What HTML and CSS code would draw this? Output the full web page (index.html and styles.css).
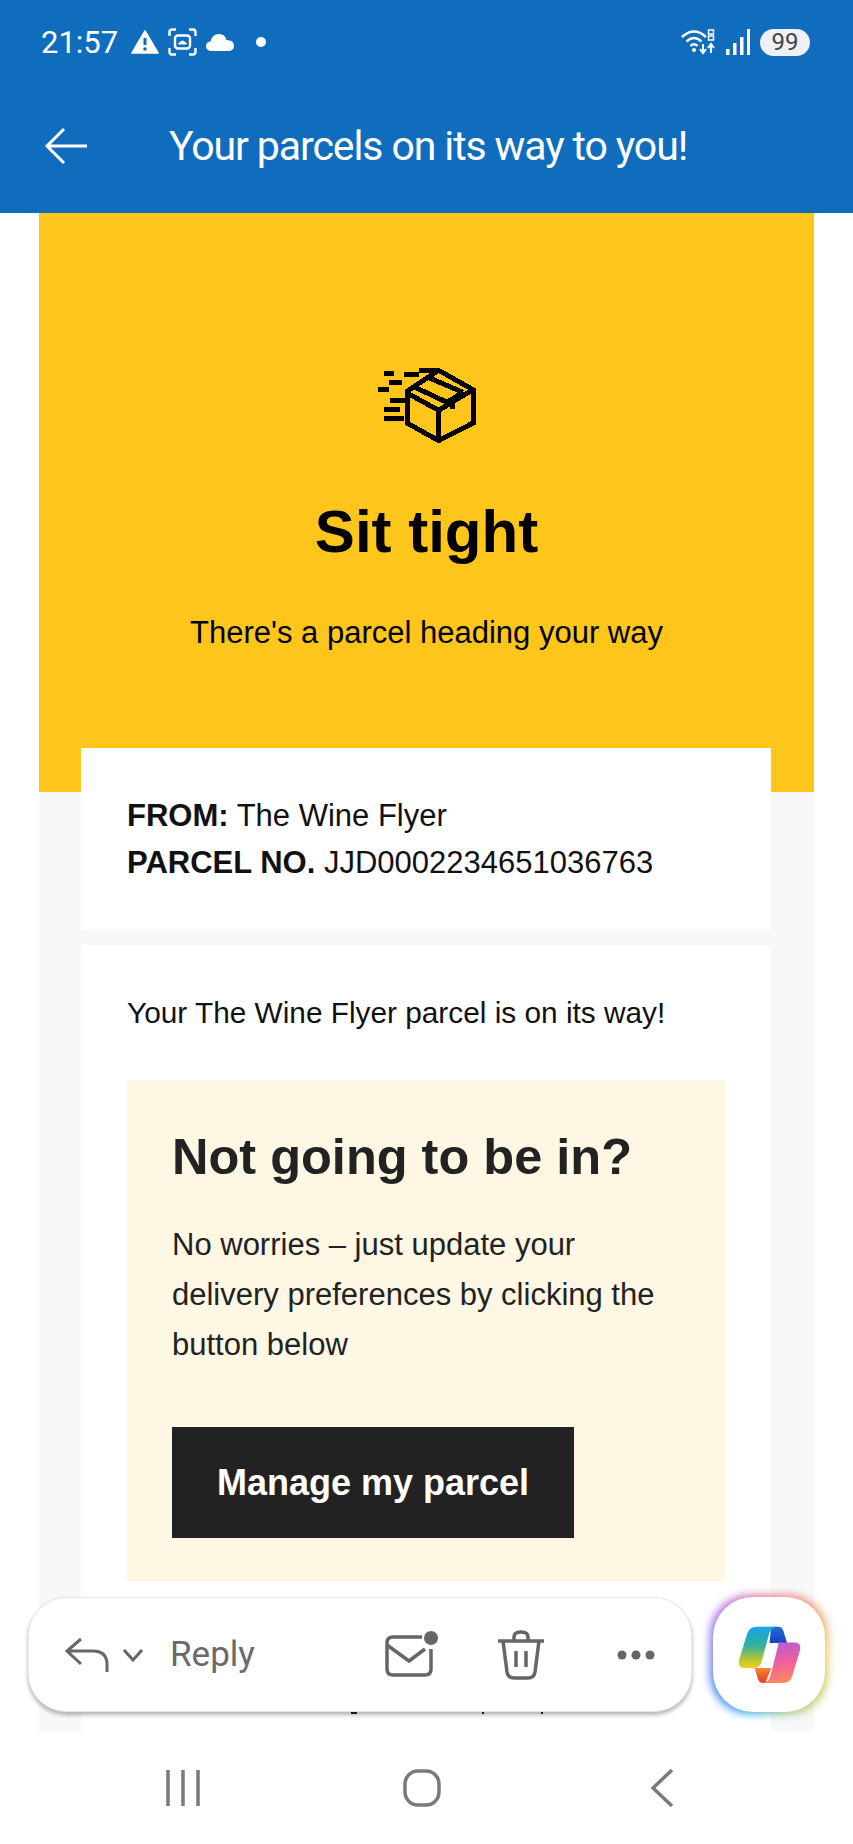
FILE: index.html
```html
<!DOCTYPE html>
<html lang="en">
  <head>
    <meta charset="UTF-8" />
    <meta name="viewport" content="width=device-width, initial-scale=1.0" />
    <title>Your parcels on its way to you!</title>
    <link rel="stylesheet" href="styles.css">
  </head>
  <body>
    <header class="top">
      <div class="status">
        <span class="time">21:57</span>
        <svg class="st-warn" width="28" height="24" viewBox="0 0 28 24">
          <path d="M14 1 27 23H1Z" fill="#fff" stroke="#fff" stroke-width="1.5" stroke-linejoin="round" />
          <path d="M14 8v7" stroke="#106cbd" stroke-width="3" />
          <circle cx="14" cy="19" r="1.8" fill="#106cbd" />
        </svg>
        <svg class="st-shot" width="29" height="28" viewBox="0 0 29 28" fill="none" stroke="#fff" stroke-width="2.4">
          <path d="M1.5 8V4q0-2.500 3-2.500H8M21 1.500h4q2.500 0 2.500 3V8M27.500 20v4q0 2.500-2.500 2.500h-4M8 26.500H4q-2.500 0-2.500-2.500v-4" />
          <rect x="7" y="7.500" width="15" height="13" rx="3" />
          <path d="M10.500 16q4-6 8 0Z" fill="#fff" stroke-width="1" />
        </svg>
        <svg class="st-cloud" width="28" height="18" viewBox="0 0 28 18">
          <path d="M6 18Q0 18 0 13 0 9 4.500 8.500 6 1 13 1q6 0 7.500 6 7.500 0 7.500 6 0 5-6 5Z" fill="#fff" />
        </svg>
        <span class="st-dot"></span>
        <span class="st-fill"></span>
        <svg class="st-wifi" width="36" height="28" viewBox="0 0 36 28" fill="none" stroke="#fff" stroke-width="2.400">
          <path d="M1 9q12-11 24 0M5.500 13.500q7.500-7 15 0M9.500 18q3.500-3.500 7 0" />
          <circle cx="13" cy="22" r="2" fill="#fff" stroke="none" />
          <path d="M22 16v8M19 21l3 4 3-4M30 25v-8M27 20l3-4 3 4" stroke-width="2" />
          <rect x="27.500" y="2" width="5" height="4" stroke-width="1.500" />
          <rect x="27.500" y="8" width="5" height="4" stroke-width="1.500" />
        </svg>
        <svg class="st-signal" width="24" height="26" viewBox="0 0 24 26" fill="#fff">
          <rect x="0" y="20" width="3.500" height="6" />
          <rect x="7" y="14" width="3.500" height="12" />
          <rect x="14" y="8" width="3.500" height="18" />
          <rect x="21" y="0" width="3" height="26" />
        </svg>
        <span class="battery">99</span>
      </div>
      <div class="appbar">
        <svg class="back" width="44" height="38" viewBox="0 0 44 38" fill="none" stroke="#fff" stroke-width="3">
          <path d="M43 19H3M20 2 3 19l17 17" />
        </svg>
        <h1>Your parcels on its way to you!</h1>
      </div>
    </header>

    <main class="viewer">
      <div class="mail">
        <section class="hero">
          <svg class="parcel" width="100" height="75" viewBox="110 85 300 225" fill="none" stroke="#000" stroke-width="15" shape-rendering="crispEdges">
            <path d="M295 303 200 250V155L295 92 398 150V250ZM200 160 295 212 398 150M295 212V305" />
            <path d="M222 142 320 188 368 158M268 115 368 158M335 175V207" />
            <path d="M130 102H160M190 104H235M235 92H295M145 128H185M114 148H145M150 182H200M130 210H178M130 236H190" />
          </svg>
          <h2>Sit tight</h2>
          <p>There's a parcel heading your way</p>
        </section>
        <section class="card ref">
          <p><b>FROM:</b> The Wine Flyer</p>
          <p><b>PARCEL NO.</b> JJD0002234651036763</p>
        </section>
        <section class="card body">
          <p class="intro">Your The Wine Flyer parcel is on its way!</p>
          <div class="notice">
            <h3>Not going to be in?</h3>
            <p>No worries – just update your delivery preferences by clicking the button below</p>
            <a class="btn" href="#">Manage my parcel</a>
          </div>
          <div class="peek"><span></span><span></span><span></span></div>
        </section>
      </div>

      <div class="actions">
        <div class="bar">
          <svg width="44" height="36" viewBox="0 0 44 36" fill="none" stroke="#666" stroke-width="3">
            <path d="M16 2 2 14l14 13M2 14h26q13 0 14 12v9" />
          </svg>
          <svg class="chev" width="22" height="14" viewBox="0 0 22 14" fill="none" stroke="#666" stroke-width="3">
            <path d="M2 2l9 10 9-10" />
          </svg>
          <span class="reply">Reply</span>
          <span class="bar-fill"></span>
          <svg class="ic-mail" width="54" height="48" viewBox="0 0 54 48" fill="none" stroke="#666" stroke-width="3.500">
            <path d="M37 6H8Q2 6 2 12V38Q2 44 8 44H40Q46 44 46 38V18" />
            <path d="M2 14 24 30 40 18" />
            <circle cx="46" cy="7" r="7" fill="#666" stroke="none" />
          </svg>
          <svg class="ic-bin" width="48" height="50" viewBox="0 0 48 50" fill="none" stroke="#666" stroke-width="3.500">
            <path d="M1 11H47M17 10V7Q17 2 24 2T31 7V10M6 11 10 42Q11 48 17 48H31Q37 48 38 42L42 11M19 21V37M29 21V37" />
          </svg>
          <svg class="ic-more" width="38" height="10" viewBox="0 0 38 10" fill="#666">
            <circle cx="5" cy="5" r="4.500" /><circle cx="19" cy="5" r="4.500" /><circle cx="33" cy="5" r="4.500" />
          </svg>
        </div>
        <div class="copilot">
          <svg width="63" height="57" viewBox="140 135 190 172">
            <defs>
              <linearGradient id="cpLeft" x1="0" y1="0" x2="0" y2="1">
                <stop offset="0" stop-color="#17a4e6" />
                <stop offset="0.45" stop-color="#2fb0a0" />
                <stop offset="0.8" stop-color="#b9c72c" />
                <stop offset="1" stop-color="#f3cf1c" />
              </linearGradient>
              <linearGradient id="cpRight" x1="0.4" y1="0" x2="0.6" y2="1">
                <stop offset="0" stop-color="#b45fd8" />
                <stop offset="0.5" stop-color="#ee5f9d" />
                <stop offset="1" stop-color="#ff8a5a" />
              </linearGradient>
              <linearGradient id="cpTop" x1="0" y1="0" x2="0" y2="1">
                <stop offset="0" stop-color="#1f6fd8" />
                <stop offset="1" stop-color="#1c3fc4" />
              </linearGradient>
              <linearGradient id="cpLow" x1="0" y1="0" x2="0" y2="1">
                <stop offset="0" stop-color="#f5863a" />
                <stop offset="1" stop-color="#e8391f" />
              </linearGradient>
            </defs>
            <path d="M240 137H262Q272 137 277 150L288 186H235Z" fill="url(#cpTop)" />
            <path d="M190 262H241L222 307H215Q204 307 200 295Z" fill="url(#cpLow)" />
            <path d="M195 137H258Q240 140 234 158L212 240Q207 262 188 262H160Q138 262 143 238L167 160Q174 137 195 137Z" fill="url(#cpLeft)" />
            <path d="M262 185H310Q332 185 327 208L304 285Q298 307 275 307H212Q232 305 238 284L247 250 258 205Q262 190 262 185Z" fill="url(#cpRight)" />
          </svg>
        </div>
      </div>
    </main>

    <nav class="sysnav">
      <svg width="36" height="38" viewBox="0 0 36 38" stroke="#7a7a7a" stroke-width="3.500">
        <path d="M3 1V37M18 1V37M33 1V37" />
      </svg>
      <svg class="home" width="38" height="38" viewBox="0 0 38 38" fill="none" stroke="#7a7a7a" stroke-width="3.500">
        <rect x="2" y="2" width="34" height="34" rx="13" />
      </svg>
      <svg width="24" height="40" viewBox="0 0 24 40" fill="none" stroke="#7a7a7a" stroke-width="3.500">
        <path d="M22 2 3 20l19 18" />
      </svg>
    </nav>
  </body>
</html>
```

FILE: styles.css
```css
* {
  box-sizing: border-box;
  margin: 0;
  padding: 0;
}
html,
body {
  height: 100%;
}
body {
  display: flex;
  flex-direction: column;
  width: 853px;
  height: 1844px;
  overflow: hidden;
  background-color: #fff;
  color: #111;
  font-family: "Liberation Sans", Arial, sans-serif;
}

/* blue top area */
.top {
  height: 213px;
  flex: none;
  background-color: #106cbd;
  color: #fff;
  font-family: Roboto, "Noto Sans", sans-serif;
}
.status {
  display: flex;
  align-items: center;
  height: 84px;
  padding: 0 43px 0 41px;
}
.time {
  font-size: 31px;
  margin-right: 13px;
}
.st-warn {
  margin-right: 9px;
}
.st-shot {
  margin-right: 9px;
}
.st-cloud {
  margin-right: 22px;
}
.st-dot {
  width: 10px;
  height: 10px;
  border-radius: 50%;
  background-color: #fff;
}
.st-fill {
  flex: 1;
}
.st-wifi {
  margin-right: 9px;
}
.st-signal {
  margin-right: 10px;
}
.battery {
  width: 50px;
  height: 27px;
  border-radius: 14px;
  background-color: #eef0f5;
  color: #444;
  font-size: 24px;
  line-height: 27px;
  text-align: center;
}
.appbar {
  display: flex;
  align-items: center;
  height: 62px;
  margin-top: 31px;
  padding-left: 44px;
}
.appbar h1 {
  margin-left: 81px;
  font-size: 41px;
  font-weight: 400;
  letter-spacing: -1.1px;
  white-space: nowrap;
}

/* mail body */
.viewer {
  position: relative;
  flex: 1;
  min-height: 0;
}
.mail {
  width: 775px;
  height: 1518px;
  margin-left: 39px;
  overflow: hidden;
  background-color: #f8f8f8;
}
.hero {
  height: 579px;
  padding-top: 155px;
  background-color: #fec61a;
  color: #000;
  text-align: center;
}
.parcel {
  display: block;
  margin: 0 auto;
}
.hero h2 {
  margin-top: 54px;
  font-size: 60px;
  line-height: 70px;
}
.hero p {
  margin-top: 46px;
  font-size: 31px;
  line-height: 40px;
}
.card {
  width: 690px;
  margin-left: 42px;
  background-color: #fff;
  padding-left: 46px;
  padding-right: 46px;
}
.ref {
  height: 182px;
  margin-top: -44px;
  padding-top: 44px;
  font-size: 31px;
  line-height: 47px;
}
.body {
  margin-top: 15px;
  padding-top: 48px;
  height: 800px;
}
.intro {
  font-size: 29.8px;
  line-height: 40px;
}
.notice {
  height: 501px;
  margin-top: 47px;
  padding: 47px 45px 0;
  background-color: #fef7e4;
  color: #222;
}
.notice h3 {
  font-size: 50.5px;
  line-height: 60px;
}
.notice p {
  margin-top: 33px;
  font-size: 31px;
  line-height: 50px;
}
.btn {
  display: block;
  width: 402px;
  height: 111px;
  margin-top: 57px;
  background-color: #222;
  color: #fff;
  font-size: 36px;
  font-weight: 700;
  line-height: 111px;
  text-align: center;
  text-decoration: none;
}

/* bits of the next paragraph showing under the action bar */
.peek {
  display: flex;
  margin-top: 131px;
  padding-left: 224px;
}
.peek span {
  width: 2px;
  height: 2px;
  background-color: #222;
}
.peek span:nth-child(1) {
  width: 6px;
}
.peek span:nth-child(2) {
  margin-left: 125px;
}
.peek span:nth-child(3) {
  margin-left: 57px;
}

/* floating actions */
.actions {
  position: absolute;
  left: 28px;
  top: 1384px;
  display: flex;
  gap: 21px;
}
.bar {
  display: flex;
  align-items: center;
  width: 664px;
  height: 115px;
  padding: 0 36px 0 36px;
  border: 1px solid #e6e6e6;
  border-radius: 38px;
  background-color: #fff;
  box-shadow: 0 3px 4px rgba(0, 0, 0, 0.3);
}
.chev {
  margin-left: 13px;
}
.reply {
  margin-left: 26px;
  color: #6a6a6a;
  font-family: Roboto, "Noto Sans", sans-serif;
  font-size: 35px;
}
.bar-fill {
  flex: 1;
}
.ic-mail {
  margin-right: 58px;
}
.ic-bin {
  margin-right: 72px;
}
.copilot {
  position: relative;
  z-index: 0;
  display: flex;
  align-items: center;
  justify-content: center;
  width: 112px;
  height: 115px;
}
.copilot::before,
.copilot::after {
  content: "";
  position: absolute;
  border-radius: 40px;
}
.copilot::before {
  inset: -2px -3px -2px -3px;
  z-index: -2;
  background: conic-gradient(#e87090, #f2d060 90deg, #b0cc70 150deg, #30a8e8 200deg, #5a80f5 250deg, #b070e8 310deg, #e87090);
  filter: blur(4px);
}
.copilot::after {
  inset: 0;
  z-index: -1;
  background-color: #fff;
}

/* android buttons */
.sysnav {
  display: flex;
  align-items: center;
  justify-content: space-between;
  flex: none;
  height: 113px;
  padding: 0 179px 0 165px;
}
.home {
  margin-right: 7px;
}
```
